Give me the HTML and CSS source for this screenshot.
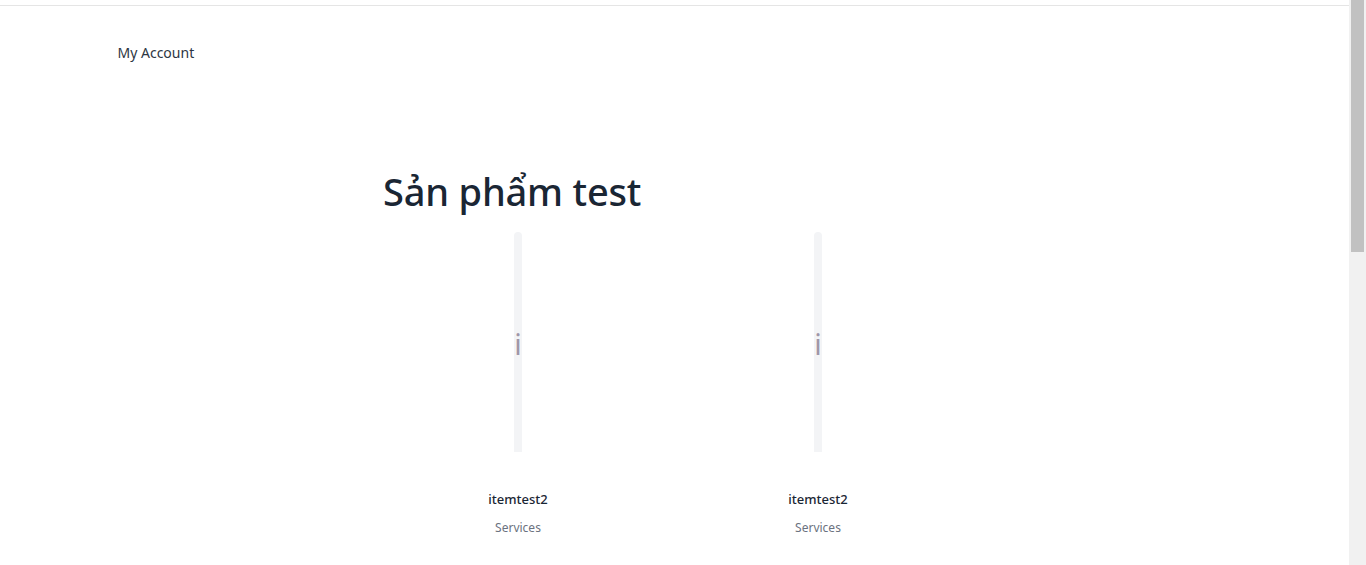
FILE: index.html
```html
<html>
  <head>
    <title>My Account</title>
    <link rel="stylesheet" href="styles.css">
  </head>
  <body>
    <div id="page-content">
      <div class="top_bar"></div>
      <div class="account_nav"><a href="#">My Account</a></div>
      <div class="products">
        <h1>Sản phẩm test</h1>
        <div class="product_grid">
          <div class="product_card">
            <div class="product_img"><span class="product_alt">i</span></div>
            <div class="product_name">itemtest2</div>
            <div class="product_cat">Services</div>
          </div>
          <div class="product_card">
            <div class="product_img"><span class="product_alt">i</span></div>
            <div class="product_name">itemtest2</div>
            <div class="product_cat">Services</div>
          </div>
        </div>
      </div>
    </div>
    <div class="scrollbar"><div class="scrollbar_thumb"></div></div>
  </body>
</html>
```

FILE: styles.css
```css
html, body {
  margin: 0px;
  padding: 0px;
  height: 100%;
  overflow: hidden;
  background-color: #FFF;
}
body {
  font-family: "Noto Sans", "Open Sans", sans-serif;
  color: #1A2634;
}
a {
  text-decoration: none;
  color: #2D3643;
}
#page-content {
  width: 1349px;
}
.top_bar {
  height: 5px;
  border-bottom: 1px solid #E5E5E5;
}
.account_nav {
  padding-top: 37px;
  padding-left: 117.5px;
  font-size: 14px;
  line-height: 20px;
}
.products {
  margin-left: 368px;
  padding-top: 101px;
}
.products h1 {
  margin: 0px;
  padding-left: 15px;
  font-size: 38px;
  line-height: 54px;
  font-weight: 500;
  letter-spacing: -0.2px;
}
.product_grid {
  display: flex;
  margin-top: 14px;
}
.product_card {
  width: 300px;
  display: flex;
  flex-direction: column;
  align-items: center;
}
.product_img {
  box-sizing: border-box;
  width: 8px;
  height: 220px;
  padding-top: 3px;
  border-radius: 4px 4px 0px 0px;
  background-color: #F3F4F6;
  display: flex;
  align-items: center;
  justify-content: center;
  overflow: hidden;
}
.product_alt {
  font-size: 29px;
  line-height: 24px;
  color: #A096A8;
}
.product_name {
  margin-top: 37px;
  font-size: 13px;
  line-height: 20px;
  font-weight: 500;
}
.product_cat {
  margin-top: 9px;
  font-size: 12px;
  line-height: 20px;
  color: #6B7280;
}
.scrollbar {
  position: absolute;
  top: 0px;
  right: 0px;
  width: 17px;
  height: 100%;
  background-color: #F1F1F1;
}
.scrollbar_thumb {
  width: 13px;
  height: 252px;
  margin-left: 2px;
  background-color: #C1C1C1;
}
```
